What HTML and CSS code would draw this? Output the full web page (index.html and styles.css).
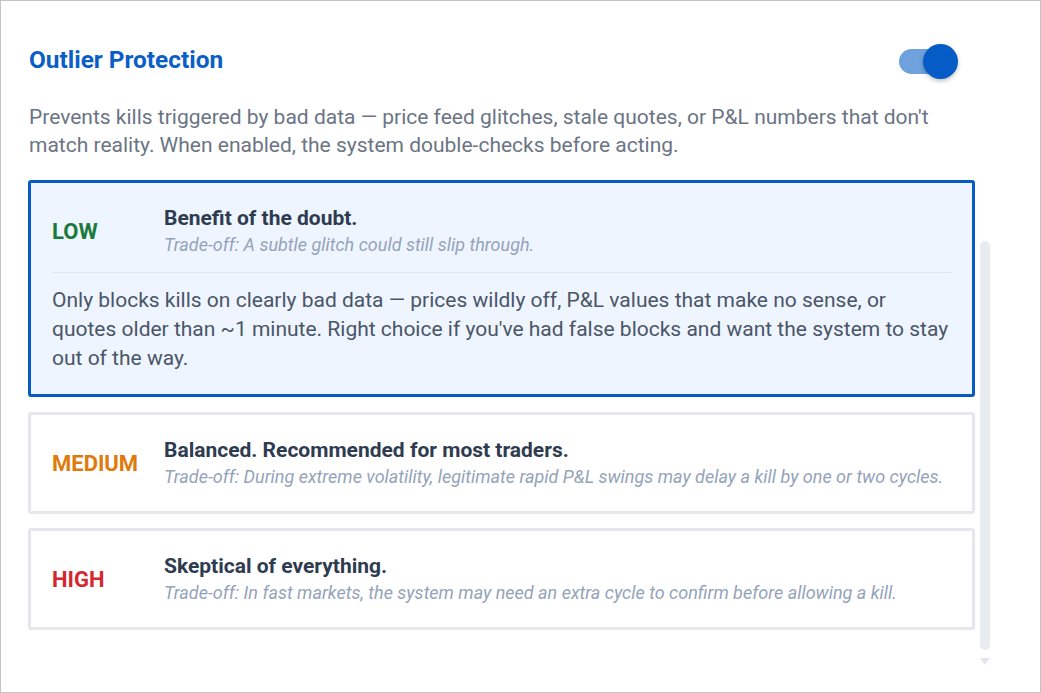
FILE: index.html
```html
<!DOCTYPE html>
<html>
<head>
<meta charset="utf-8">
<link rel="stylesheet" href="styles.css">
</head>
<body>
<div class="frame">
  <div class="header">
    <h1 class="title">Outlier Protection</h1>
    <div class="toggle"><div class="track"></div><div class="knob"></div></div>
  </div>
  <p class="desc">Prevents kills triggered by bad data — price feed glitches, stale quotes, or P&amp;L numbers that don't match reality. When enabled, the system double-checks before acting.</p>
  <div class="area">
    <div class="list">
      <div class="card selected">
        <div class="row">
          <div class="level low">LOW</div>
          <div class="info">
            <div class="name">Benefit of the doubt.</div>
            <div class="trade">Trade-off: A subtle glitch could still slip through.</div>
          </div>
        </div>
        <div class="detail">Only blocks kills on clearly bad data — prices wildly off, P&amp;L values that make no sense, or quotes older than ~1 minute. Right choice if you've had false blocks and want the system to stay out of the way.</div>
      </div>
      <div class="card">
        <div class="row">
          <div class="level medium">MEDIUM</div>
          <div class="info">
            <div class="name">Balanced. Recommended for most traders.</div>
            <div class="trade">Trade-off: During extreme volatility, legitimate rapid P&amp;L swings may delay a kill by one or two cycles.</div>
          </div>
        </div>
      </div>
      <div class="card">
        <div class="row">
          <div class="level high">HIGH</div>
          <div class="info">
            <div class="name">Skeptical of everything.</div>
            <div class="trade">Trade-off: In fast markets, the system may need an extra cycle to confirm before allowing a kill.</div>
          </div>
        </div>
      </div>
    </div>
    <div class="scroll">
      <div class="thumb"></div>
      <div class="arrow"></div>
    </div>
  </div>
</div>
</body>
</html>
```
FILE: styles.css
```css
html, body {
  margin: 0;
  padding: 0;
  background: #ffffff;
}
body {
  font-family: Roboto, "Liberation Sans", sans-serif;
  width: 1041px;
  height: 693px;
  box-sizing: border-box;
  border: 1px solid #c4c4c4;
  overflow: hidden;
}
.frame {
  padding: 43px 0 0 27px;
}
.header {
  display: flex;
  align-items: flex-start;
  justify-content: space-between;
  width: 931px;
  height: 36px;
}
.title {
  margin: 1px 0 0 1px;
  font-size: 24.4px;
  line-height: 30px;
  font-weight: 700;
  color: #0a5ec8;
}
.toggle {
  position: relative;
  width: 60px;
  height: 36px;
}
.track {
  position: absolute;
  left: 0;
  top: 5px;
  width: 42px;
  height: 25px;
  border-radius: 12.5px;
  background: #6fa2dd;
}
.knob {
  position: absolute;
  left: 24px;
  top: 0;
  width: 35px;
  height: 35px;
  border-radius: 50%;
  background: #065cc6;
  box-shadow: 0 2px 4px rgba(0,0,0,0.25);
}
.desc {
  margin: 23px 0 0 1px;
  width: 930px;
  font-size: 21px;
  line-height: 28px;
  color: #6b7484;
}
.area {
  display: flex;
  margin-top: 21px;
}
.list {
  width: 947px;
  display: flex;
  flex-direction: column;
  gap: 14px;
}
.card {
  border: 3px solid #e5e7eb;
  border-radius: 3px;
  background: #fff;
  padding: 0 21px;
}
.card.selected {
  border-color: #075cc4;
  background: #eef5fe;
  margin-bottom: 1px;
}
.row {
  display: flex;
  align-items: center;
  padding: 21px 0 21px;
}
.selected .row {
  padding-bottom: 14px;
  border-bottom: 1px solid #dfe6ef;
}
.level {
  width: 112px;
  flex: none;
  font-size: 22px;
  font-weight: 700;
  padding-top: 1px;
}
.low { color: #187a3c; }
.medium { color: #df7a0c; }
.high { color: #d6262e; }
.name {
  font-size: 21px;
  font-weight: 700;
  color: #2e3b50;
  line-height: 28px;
}
.trade {
  font-size: 18px;
  font-style: italic;
  color: #94a3ba;
  line-height: 26px;
}
.detail {
  padding: 13px 0 21px 0;
  margin-right: 2px;
  font-size: 21px;
  line-height: 29px;
  color: #4a5668;
}
.scroll {
  margin-left: 5px;
  margin-top: 61px;
  width: 10px;
  display: flex;
  flex-direction: column;
  align-items: center;
}
.thumb {
  width: 10px;
  height: 409px;
  border-radius: 5px;
  background: #e8ebf0;
}
.arrow {
  margin-top: 8px;
  width: 0;
  height: 0;
  border-left: 5px solid transparent;
  border-right: 5px solid transparent;
  border-top: 7px solid #e4e7ec;
}
```
